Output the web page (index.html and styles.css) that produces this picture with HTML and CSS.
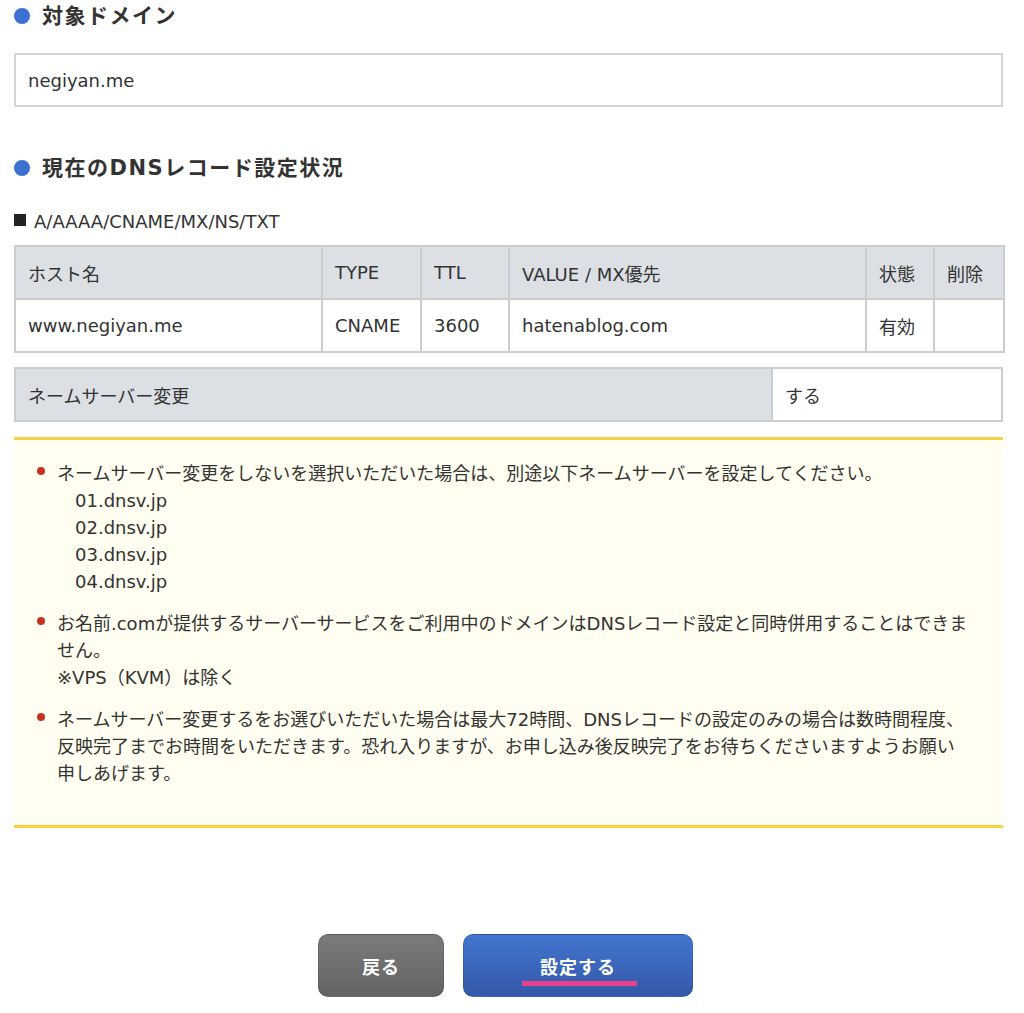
FILE: index.html
```html
<!DOCTYPE html>
<html lang="ja">
<head>
    <meta charset="UTF-8">
    <meta name="viewport" content="width=device-width, initial-scale=1.0">
    <title>DNSレコード設定 確認</title>
    <link rel="stylesheet" href="styles.css">
</head>
<body>
    <div class="container">
        <h2 class="section-title">対象ドメイン</h2>
        <div class="domain-box">negiyan.me</div>

        <h2 class="section-title title-dns">現在のDNSレコード設定状況</h2>
        <p class="record-label">A/AAAA/CNAME/MX/NS/TXT</p>

        <table class="record-table">
            <thead>
                <tr>
                    <th class="col-host">ホスト名</th>
                    <th class="col-type">TYPE</th>
                    <th class="col-ttl">TTL</th>
                    <th class="col-value">VALUE / MX優先</th>
                    <th class="col-state">状態</th>
                    <th class="col-del">削除</th>
                </tr>
            </thead>
            <tbody>
                <tr>
                    <td>www.negiyan.me</td>
                    <td>CNAME</td>
                    <td>3600</td>
                    <td>hatenablog.com</td>
                    <td>有効</td>
                    <td></td>
                </tr>
            </tbody>
        </table>

        <table class="ns-table">
            <tr>
                <th>ネームサーバー変更</th>
                <td>する</td>
            </tr>
        </table>

        <div class="notice">
            <ul class="notice-list">
                <li>
                    ネームサーバー変更をしないを選択いただいた場合は、別途以下ネームサーバーを設定してください。
                    <div class="ns-list">
                        01.dnsv.jp<br>
                        02.dnsv.jp<br>
                        03.dnsv.jp<br>
                        04.dnsv.jp
                    </div>
                </li>
                <li>
                    お名前.comが提供するサーバーサービスをご利用中のドメインはDNSレコード設定と同時併用することはできません。<br>
                    ※VPS（KVM）は除く
                </li>
                <li>
                    ネームサーバー変更するをお選びいただいた場合は最大72時間、DNSレコードの設定のみの場合は数時間程度、反映完了までお時間をいただきます。恐れ入りますが、お申し込み後反映完了をお待ちくださいますようお願い申しあげます。
                </li>
            </ul>
        </div>

        <div class="actions">
            <button class="btn btn-back">戻る</button>
            <button class="btn btn-submit"><span class="btn-label">設定する</span></button>
        </div>
    </div>
</body>
</html>
```

FILE: styles.css
```css
* { margin: 0; padding: 0; box-sizing: border-box; }
body {
    font-family: "DejaVu Sans", "Noto Sans CJK JP", sans-serif;
    color: #333;
    background: #fff;
    font-size: 18px;
}
.container {
    width: 989px;
    margin-left: 14px;
}
.section-title {
    display: flex;
    align-items: center;
    gap: 12px;
    font-size: 21px;
    font-weight: bold;
    letter-spacing: 1.5px;
    line-height: 32px;
    color: #333;
}
.section-title::before {
    content: "";
    width: 16px;
    height: 16px;
    border-radius: 50%;
    background: #3d6fd1;
    flex-shrink: 0;
}
.title-dns { margin-top: 45px; }
.domain-box {
    margin-top: 21px;
    height: 54px;
    border: 2px solid #d3d5d8;
    padding: 0 12px;
    display: flex;
    align-items: center;
}
.record-label {
    margin-top: 25px;
    line-height: 26px;
    display: flex;
    align-items: center;
    gap: 8px;
}
.record-label::before {
    content: "";
    width: 12px;
    height: 12px;
    background: #222;
    margin-top: -5px;
}
table {
    width: 100%;
    border-collapse: collapse;
    table-layout: fixed;
}
th, td {
    border: 2px solid #cbcdd0;
    height: 53px;
    padding: 0 12px;
    text-align: left;
    font-weight: normal;
}
th { background: #dcdfe4; }
td { background: #fff; }
.record-table { margin-top: 10px; }
.col-host { width: 307px; }
.col-type { width: 99px; }
.col-ttl { width: 88px; }
.col-value { width: 357px; }
.col-state { width: 68px; }
.col-del { width: 70px; }
.ns-table { margin-top: 14px; }
.ns-table th { width: 757px; }
.notice {
    margin-top: 15px;
    background: #fffef0;
    border-top: 3px solid #f8d245;
    border-bottom: 3px solid #f8d245;
    padding: 20px 31px 38px 43px;
}
.notice-list {
    list-style: none;
    line-height: 27px;
}
.notice-list li {
    position: relative;
}
.notice-list li + li { margin-top: 15px; }
.notice-list li::before {
    content: "";
    position: absolute;
    left: -20px;
    top: 7px;
    width: 8px;
    height: 8px;
    border-radius: 50%;
    background: #c9311f;
}
.ns-list { padding-left: 18px; }
.actions {
    margin-top: 106px;
    display: flex;
    justify-content: center;
    gap: 19px;
    padding-right: 6px;
}
.btn {
    height: 63px;
    border: 1px solid rgba(0,0,0,0.1);
    border-radius: 10px;
    color: #fff;
    font-family: "Noto Sans CJK JP", sans-serif;
    font-size: 18px;
    font-weight: bold;
    letter-spacing: 1px;
    cursor: pointer;
}
.btn-back {
    width: 126px;
    background: linear-gradient(#7b7b7b, #636363);
}
.btn-submit {
    width: 230px;
    background: linear-gradient(#4375cf, #3358a7);
}
.btn-label {
    position: relative;
    display: inline-block;
}
.btn-label::after {
    content: "";
    position: absolute;
    left: -18px;
    right: -21px;
    bottom: -7px;
    height: 5px;
    background: #ea418b;
}
```
